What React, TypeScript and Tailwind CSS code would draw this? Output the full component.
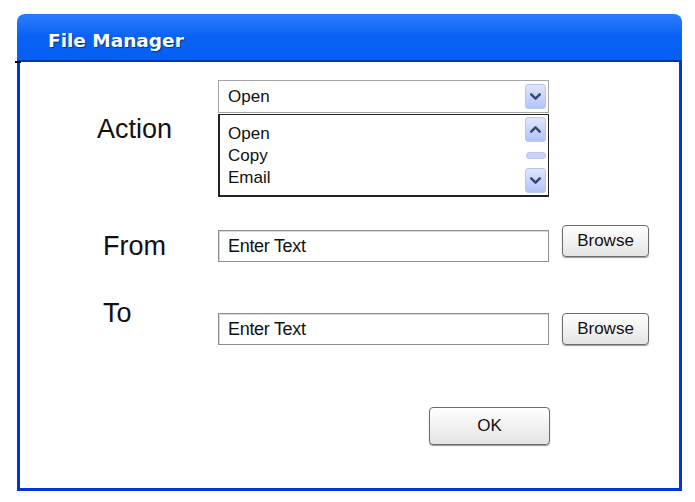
import { ChevronDown, ChevronUp } from "lucide-react";

const sans = "font-['Liberation_Sans',Arial,sans-serif]";

function ScrollButton({ up = false }: { up?: boolean }) {
  return (
    <div className="w-[21px] h-[25px] rounded-[3px] border border-[#b9c6ee] bg-gradient-to-b from-[#dfe6fd] to-[#b3c3fa] flex items-center justify-center">
      {up ? (
        <ChevronUp className="w-[17px] h-[17px] text-[#36496f]" strokeWidth={3.6} />
      ) : (
        <ChevronDown className="w-[17px] h-[17px] text-[#36496f]" strokeWidth={3.6} />
      )}
    </div>
  );
}

function TextBox() {
  return (
    <div className="w-[331px] h-[32px] border border-[#8f8f8f] bg-white shadow-[inset_1px_1px_0_#d8d8d8] flex items-center pl-[9px] text-[18px] text-[#111] tracking-[-0.3px]">
      Enter Text
    </div>
  );
}

function PushButton({ label, className }: { label: string; className: string }) {
  return (
    <button
      className={`rounded-[4px] border border-[#6b6b6b] bg-gradient-to-b from-white to-[#e4e4e4] shadow-[0_1px_1px_#9a9a9a] text-[17px] text-[#111] ${className}`}
    >
      {label}
    </button>
  );
}

export default function App() {
  return (
    <div className={`w-[695px] h-[502px] bg-white ${sans}`}>
      <div className="relative ml-[17px] pt-[14px] w-[665px]">
        <div className="h-[48px] rounded-t-[8px] bg-gradient-to-b from-[#2a7bff] via-[#0862f5] to-[#0560f0] border-b-[2px] border-[#0035b8] flex items-center pl-[31px] pt-[7px]">
          <span className="font-['DejaVu_Sans',sans-serif] font-bold text-[18.5px] text-white [text-shadow:1px_1px_1px_#0a2f8a]">
            File Manager
          </span>
        </div>
        <div className="absolute left-[-2px] top-[61px] w-[6px] h-[2px] bg-black" />
        <div className="h-[429px] border-x-[3px] border-b-[3px] border-[#0036d2] bg-white pt-[18px]">
          <div className="flex items-start">
            <div className="w-[198px] pl-[77px] pt-[33px] text-[27px] leading-[32px] text-[#111]">Action</div>
            <div className="w-[331px]">
              <div className="h-[33px] border border-[#a5a5a5] bg-white flex items-center justify-between pl-[9px] pr-[2px] text-[17px] text-[#111]">
                <span>Open</span>
                <ScrollButton />
              </div>
              <div className="mt-[1px] h-[83px] border border-[#222] border-l-[2px] border-b-[2px] bg-white flex justify-between">
                <div className="pt-[8px] pl-[8px] text-[17px] leading-[22px] text-[#111]">
                  <div>Open</div>
                  <div>Copy</div>
                  <div>Email</div>
                </div>
                <div className="w-[25px] flex flex-col items-center justify-between py-[2px]">
                  <ScrollButton up />
                  <div className="w-[20px] h-[7px] rounded-[3px] border border-[#b9c6ee] bg-[#c7d3fb]" />
                  <ScrollButton />
                </div>
              </div>
            </div>
          </div>

          <div className="flex items-start mt-[28px]">
            <div className="w-[198px] pl-[83px] mt-[5px] text-[27px] leading-[32px] text-[#111]">From</div>
            <div className="mt-[5px]">
              <TextBox />
            </div>
            <PushButton label="Browse" className="ml-[13px] w-[87px] h-[32px]" />
          </div>

          <div className="flex items-start mt-[35px]">
            <div className="w-[198px] pl-[83px] text-[27px] leading-[32px] text-[#111]">To</div>
            <div className="mt-[16px]">
              <TextBox />
            </div>
            <PushButton label="Browse" className="ml-[13px] mt-[16px] w-[87px] h-[32px]" />
          </div>

          <PushButton label="OK" className="ml-[409px] mt-[62px] w-[121px] h-[38px]" />
        </div>
      </div>
    </div>
  );
}
